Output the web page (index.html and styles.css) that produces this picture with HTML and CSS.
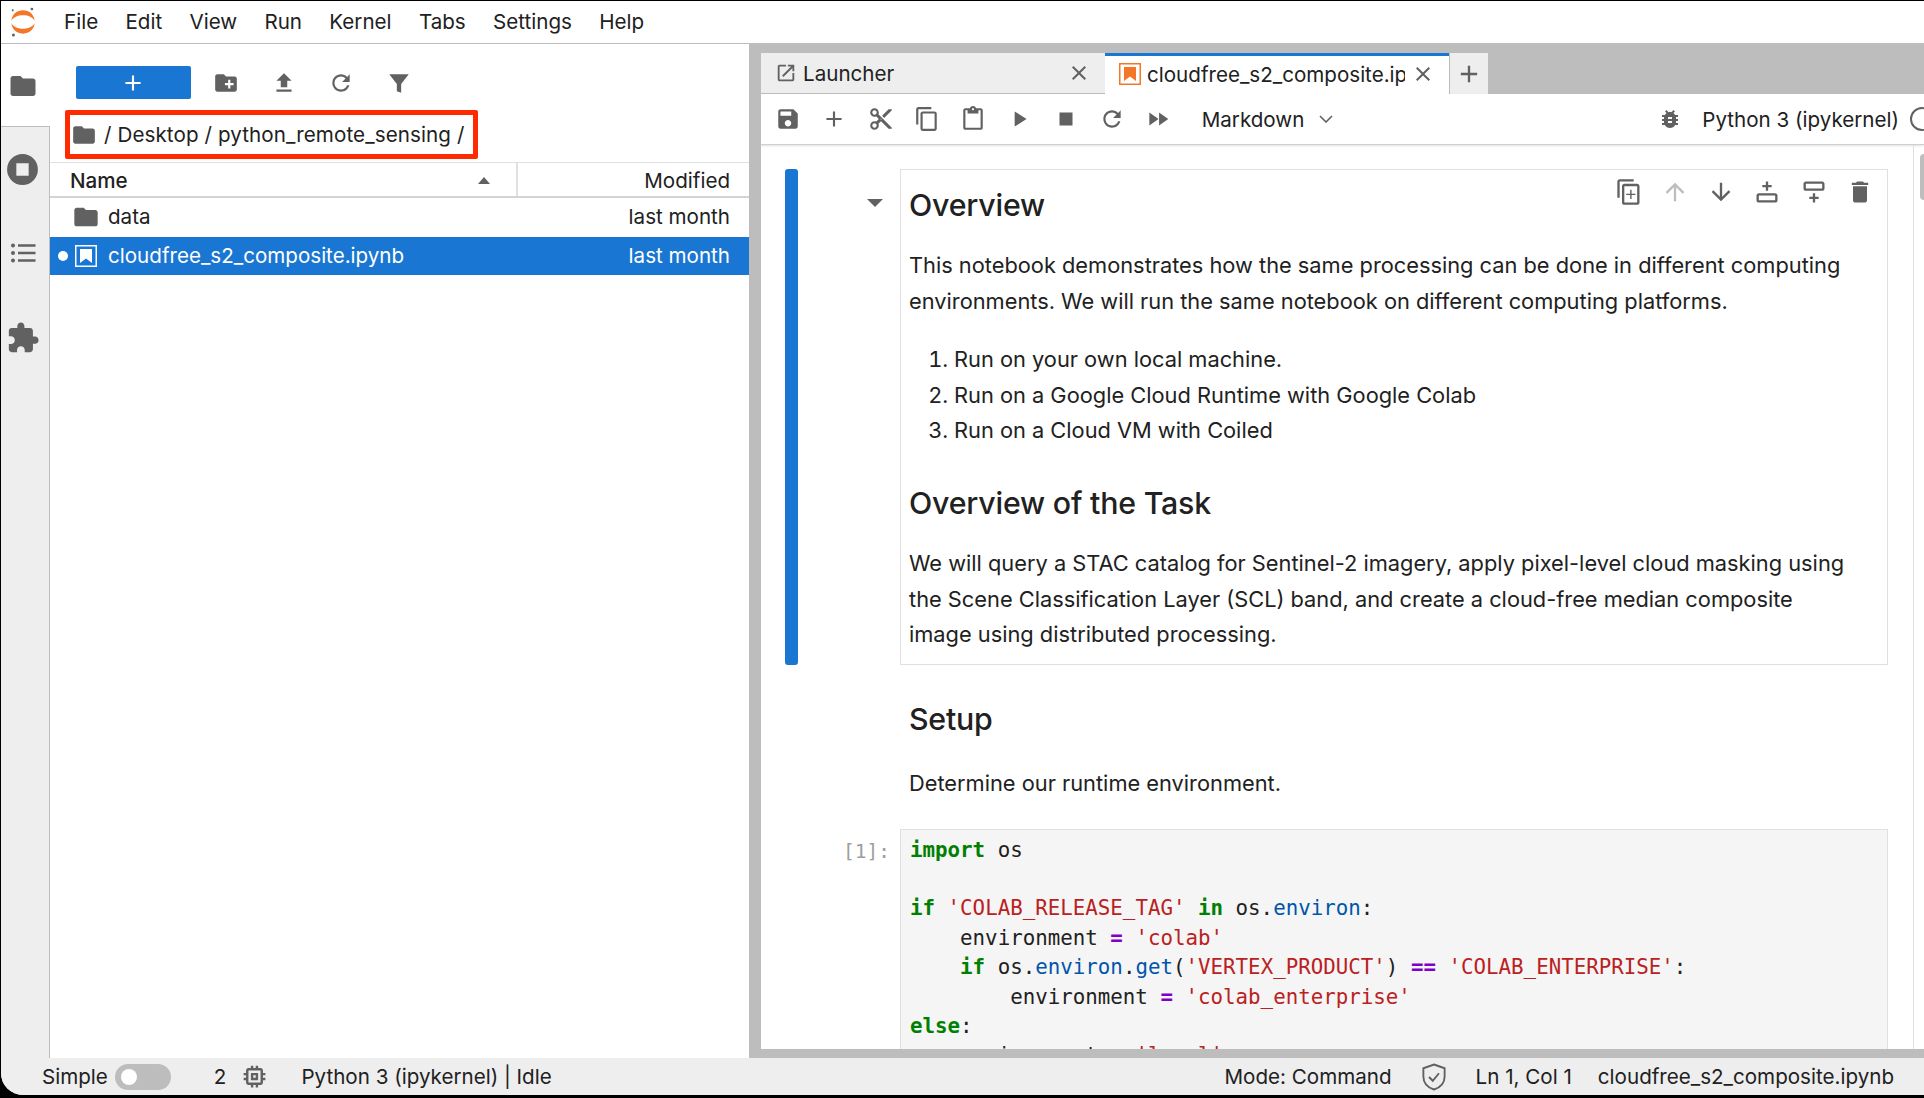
FILE: index.html
```html
<!DOCTYPE html>
<html lang="en">
  <head>
    <meta charset="UTF-8" />
    <title>JupyterLab</title>
    <link rel="stylesheet" href="styles.css">
  </head>
  <body>
    <!-- Icon sprite -->
    <svg class="sprite" xmlns="http://www.w3.org/2000/svg">
      <symbol id="i-folder" viewBox="0 0 24 24"><path d="M10 4H4c-1.1 0-1.99.9-1.99 2L2 18c0 1.1.9 2 2 2h16c1.1 0 2-.9 2-2V8c0-1.1-.9-2-2-2h-8l-2-2z"/></symbol>
      <symbol id="i-add" viewBox="0 0 24 24"><path d="M19 13h-6v6h-2v-6H5v-2h6V5h2v6h6v2z"/></symbol>
      <symbol id="i-newfolder" viewBox="0 0 24 24"><path d="M20 6h-8l-2-2H4c-1.11 0-1.99.89-1.99 2L2 18c0 1.11.89 2 2 2h16c1.11 0 2-.89 2-2V8c0-1.11-.89-2-2-2zm-1 8h-3v3h-2v-3h-3v-2h3V9h2v3h3v2z"/></symbol>
      <symbol id="i-upload" viewBox="0 0 24 24"><path d="M9 16h6v-6h4l-7-7-7 7h4zm-4 2h14v2H5z"/></symbol>
      <symbol id="i-refresh" viewBox="0 0 24 24"><path d="M17.65 6.35C16.2 4.9 14.21 4 12 4c-4.42 0-7.99 3.58-7.99 8s3.57 8 7.99 8c3.73 0 6.84-2.55 7.73-6h-2.08c-.82 2.33-3.04 4-5.65 4-3.31 0-6-2.69-6-6s2.69-6 6-6c1.66 0 3.14.69 4.22 1.78L13 11h7V4l-2.35 2.35z"/></symbol>
      <symbol id="i-filter" viewBox="0 0 24 24"><path d="M3 4h18l-7 9v8l-4-1.5V13z"/></symbol>
      <symbol id="i-save" viewBox="0 0 24 24"><path d="M17 3H5c-1.11 0-2 .9-2 2v14c0 1.1.89 2 2 2h14c1.1 0 2-.9 2-2V7l-4-4zm-5 16c-1.66 0-3-1.34-3-3s1.34-3 3-3 3 1.34 3 3-1.34 3-3 3zm3-10H5V5h10v4z"/></symbol>
      <symbol id="i-cut" viewBox="0 0 24 24"><path d="M9.64 7.64c.23-.5.36-1.05.36-1.64 0-2.21-1.79-4-4-4S2 3.79 2 6s1.79 4 4 4c.59 0 1.14-.13 1.64-.36L10 12l-2.36 2.36C7.14 14.13 6.59 14 6 14c-2.21 0-4 1.79-4 4s1.79 4 4 4 4-1.79 4-4c0-.59-.13-1.14-.36-1.64L12 14l7 7h3v-1L9.64 7.64zM6 8c-1.1 0-2-.89-2-2s.9-2 2-2 2 .89 2 2-.9 2-2 2zm0 12c-1.1 0-2-.89-2-2s.9-2 2-2 2 .89 2 2-.9 2-2 2zm6-7.5c-.28 0-.5-.22-.5-.5s.22-.5.5-.5.5.22.5.5-.22.5-.5.5zM19 3l-6 6 2 2 7-7V3z"/></symbol>
      <symbol id="i-copy" viewBox="0 0 24 24"><path d="M16 1H4c-1.1 0-2 .9-2 2v14h2V3h12V1zm3 4H8c-1.1 0-2 .9-2 2v14c0 1.1.9 2 2 2h11c1.1 0 2-.9 2-2V7c0-1.1-.9-2-2-2zm0 16H8V7h11v14z"/></symbol>
      <symbol id="i-paste" viewBox="0 0 24 24"><path d="M19 2h-4.18C14.4.84 13.3 0 12 0c-1.3 0-2.4.84-2.82 2H5c-1.1 0-2 .9-2 2v16c0 1.1.9 2 2 2h14c1.1 0 2-.9 2-2V4c0-1.1-.9-2-2-2zm-7 0c.55 0 1 .45 1 1s-.45 1-1 1-1-.45-1-1 .45-1 1-1zm7 18H5V4h2v3h10V4h2v16z"/></symbol>
      <symbol id="i-run" viewBox="0 0 24 24"><path d="M8 5v14l11-7z"/></symbol>
      <symbol id="i-stop" viewBox="0 0 24 24"><path d="M6 6h12v12H6z"/></symbol>
      <symbol id="i-ff" viewBox="0 0 24 24"><path d="M4 18l8.5-6L4 6v12zm9-12v12l8.5-6L13 6z"/></symbol>
      <symbol id="i-bug" viewBox="0 0 24 24"><path d="M20 8h-2.81c-.45-.78-1.07-1.45-1.82-1.96L17 4.41 15.59 3l-2.17 2.17C12.96 5.06 12.49 5 12 5c-.49 0-.96.06-1.41.17L8.41 3 7 4.41l1.62 1.63C7.88 6.55 7.26 7.22 6.81 8H4v2h2.09c-.05.33-.09.66-.09 1v1H4v2h2v1c0 .34.04.67.09 1H4v2h2.81c1.04 1.79 2.97 3 5.19 3s4.15-1.21 5.19-3H20v-2h-2.09c.05-.33.09-.66.09-1v-1h2v-2h-2v-1c0-.34-.04-.67-.09-1H20V8zm-6 8h-4v-2h4v2zm0-4h-4v-2h4v2z"/></symbol>
      <symbol id="i-up" viewBox="0 0 24 24"><path d="M4 12l1.41 1.41L11 7.83V20h2V7.83l5.58 5.59L20 12l-8-8-8 8z"/></symbol>
      <symbol id="i-down" viewBox="0 0 24 24"><path d="M20 12l-1.41-1.41L13 16.17V4h-2v12.17l-5.58-5.59L4 12l8 8 8-8z"/></symbol>
      <symbol id="i-trash" viewBox="0 0 24 24"><path d="M6 19c0 1.1.9 2 2 2h8c1.1 0 2-.9 2-2V7H6v12zM19 4h-3.5l-1-1h-5l-1 1H5v2h14V4z"/></symbol>
      <symbol id="i-close" viewBox="0 0 24 24"><path d="M19 6.41L17.59 5 12 10.59 6.41 5 5 6.41 10.59 12 5 17.59 6.41 19 12 13.41 17.59 19 19 17.59 13.41 12z"/></symbol>
      <symbol id="i-puzzle" viewBox="0 0 24 24"><path d="M20.5 11H19V7c0-1.1-.9-2-2-2h-4V3.5C13 2.12 11.88 1 10.5 1S8 2.12 8 3.5V5H4c-1.1 0-1.99.9-1.99 2v3.8H3.5c1.49 0 2.7 1.21 2.7 2.7s-1.21 2.7-2.7 2.7H2V20c0 1.1.9 2 2 2h3.8v-1.5c0-1.49 1.21-2.7 2.7-2.7 1.49 0 2.7 1.21 2.7 2.7V22H17c1.1 0 2-.9 2-2v-4h1.5c1.38 0 2.5-1.12 2.5-2.5S21.88 11 20.5 11z"/></symbol>
      <symbol id="i-list" viewBox="0 0 24 24"><path d="M8 5h14v2H8zM8 11h14v2H8zM8 17h14v2H8z"/><circle cx="4" cy="6" r="1.6"/><circle cx="4" cy="12" r="1.6"/><circle cx="4" cy="18" r="1.6"/></symbol>
      <symbol id="i-running" viewBox="0 0 24 24"><path fill-rule="evenodd" d="M12 2a10 10 0 1 0 0 20 10 10 0 0 0 0-20zM8 8h8v8H8z"/></symbol>
      <symbol id="i-chip" viewBox="0 0 24 24"><path d="M15 9H9v6h6V9zm-2 4h-2v-2h2v2zm8-2V9h-2V7c0-1.1-.9-2-2-2h-2V3h-2v2h-2V3H9v2H7c-1.1 0-2 .9-2 2v2H3v2h2v2H3v2h2v2c0 1.1.9 2 2 2h2v2h2v-2h2v2h2v-2h2c1.1 0 2-.9 2-2v-2h2v-2h-2v-2h2zm-4 6H7V7h10v10z"/></symbol>
      <symbol id="i-launch" viewBox="0 0 24 24"><path d="M19 19H5V5h7V3H5c-1.11 0-2 .9-2 2v14c0 1.1.89 2 2 2h14c1.1 0 2-.9 2-2v-7h-2v7zM14 3v2h3.59l-9.83 9.83 1.41 1.41L19 6.41V10h2V3h-7z"/></symbol>
      <symbol id="i-notebook" viewBox="0 0 22 22"><path fill-rule="evenodd" d="M0 0h22v22H0zM1.5 1.5v19h19v-19z"/><path d="M5 4h12v14l-6-4.5L5 18z"/></symbol>
      <symbol id="i-copybelow" viewBox="0 0 24 24"><path d="M16 1H4c-1.1 0-2 .9-2 2v14h2V3h12V1zm3 4H8c-1.1 0-2 .9-2 2v14c0 1.1.9 2 2 2h11c1.1 0 2-.9 2-2V7c0-1.1-.9-2-2-2zm0 16H8V7h11v14z"/><path d="M13 10h1.2v3.4h3.3v1.2h-3.3V18H13v-3.4H9.6v-1.2H13z"/></symbol>
      <symbol id="i-insertabove" viewBox="0 0 24 24"><path fill-rule="evenodd" d="M5 13h14c1.1 0 2 .9 2 2v4c0 1.1-.9 2-2 2H5c-1.1 0-2-.9-2-2v-4c0-1.1.9-2 2-2zm0 2v4h14v-4z"/><path d="M11 3h2v3h3v2h-3v3h-2V8H8V6h3z"/></symbol>
      <symbol id="i-insertbelow" viewBox="0 0 24 24"><path fill-rule="evenodd" d="M5 3h14c1.1 0 2 .9 2 2v4c0 1.1-.9 2-2 2H5c-1.1 0-2-.9-2-2V5c0-1.1.9-2 2-2zm0 2v4h14V5z"/><path d="M11 13h2v3h3v2h-3v3h-2v-3H8v-2h3z"/></symbol>
    </svg>

    <div class="app">
      <!-- Menu bar -->
      <header class="menubar">
        <svg class="logo" viewBox="0 0 38 46" xmlns="http://www.w3.org/2000/svg">
          <path fill="#f37726" d="M19 13C11 13 5 16 2 21 3 12 10 6 19 6s16 6 17 15c-3-5-9-8-17-8z"/>
          <path fill="#f37726" d="M19 33c8 0 14-3 17-8-1 9-8 15-17 15S3 34 2 25c3 5 9 8 17 8z"/>
          <circle cx="32" cy="4" r="2" fill="#616161"/>
          <circle cx="4" cy="6" r="1.5" fill="#616161"/>
          <circle cx="5" cy="42" r="2.2" fill="#616161"/>
        </svg>
        <nav class="menu">
          <span>File</span><span>Edit</span><span>View</span><span>Run</span>
          <span>Kernel</span><span>Tabs</span><span>Settings</span><span>Help</span>
        </nav>
      </header>

      <div class="workspace">
        <!-- Left icon rail -->
        <aside class="rail">
          <div class="rail-tab active"><svg class="ic ic-30"><use href="#i-folder"/></svg></div>
          <div class="rail-tab"><svg class="ic ic-37"><use href="#i-running"/></svg></div>
          <div class="rail-tab"><svg class="ic ic-30"><use href="#i-list"/></svg></div>
          <div class="rail-tab low"><svg class="ic ic-34"><use href="#i-puzzle"/></svg></div>
        </aside>

        <!-- File browser -->
        <section class="browser">
          <div class="browser-tools">
            <button class="new-btn"><svg class="ic ic-26"><use href="#i-add"/></svg></button>
            <svg class="ic ic-26"><use href="#i-newfolder"/></svg>
            <svg class="ic ic-26"><use href="#i-upload"/></svg>
            <svg class="ic ic-26"><use href="#i-refresh"/></svg>
            <svg class="ic ic-26"><use href="#i-filter"/></svg>
          </div>
          <div class="crumbs">
            <svg class="ic ic-26"><use href="#i-folder"/></svg>
            <span>/ Desktop / python_remote_sensing /</span>
          </div>
          <div class="file-head">
            <div class="col-name">
              <span>Name</span>
              <span class="sort-arrow"></span>
            </div>
            <div class="col-mod">Modified</div>
          </div>
          <div class="file-row">
            <svg class="ic ic-28"><use href="#i-folder"/></svg>
            <span class="file-name">data</span>
            <span class="file-date">last month</span>
          </div>
          <div class="file-row selected">
            <span class="dot"></span>
            <svg class="ic ic-22 white"><use href="#i-notebook"/></svg>
            <span class="file-name">cloudfree_s2_composite.ipynb</span>
            <span class="file-date">last month</span>
          </div>
        </section>

        <div class="splitter"></div>

        <!-- Notebook area -->
        <main class="main">
          <div class="tabbar">
            <div class="tab">
              <svg class="ic ic-22"><use href="#i-launch"/></svg>
              <span class="tab-label">Launcher</span>
              <svg class="ic ic-24 tab-close"><use href="#i-close"/></svg>
            </div>
            <div class="tab current">
              <svg class="ic ic-22 orange"><use href="#i-notebook"/></svg>
              <span class="tab-label">cloudfree_s2_composite.ipynb</span>
              <svg class="ic ic-24 tab-close"><use href="#i-close"/></svg>
            </div>
            <div class="tab-add"><svg class="ic ic-28"><use href="#i-add"/></svg></div>
          </div>

          <div class="nb-toolbar">
            <svg class="ic ic-26"><use href="#i-save"/></svg>
            <svg class="ic ic-26"><use href="#i-add"/></svg>
            <svg class="ic ic-26"><use href="#i-cut"/></svg>
            <svg class="ic ic-26"><use href="#i-copy"/></svg>
            <svg class="ic ic-26"><use href="#i-paste"/></svg>
            <svg class="ic ic-26"><use href="#i-run"/></svg>
            <svg class="ic ic-26"><use href="#i-stop"/></svg>
            <svg class="ic ic-26"><use href="#i-refresh"/></svg>
            <svg class="ic ic-26"><use href="#i-ff"/></svg>
            <div class="cell-type">
              <span>Markdown</span>
              <svg class="chevron" viewBox="0 0 14 8"><path d="M1 1l6 6 6-6" fill="none" stroke="#616161" stroke-width="1.6"/></svg>
            </div>
            <div class="kernel">
              <svg class="ic ic-24"><use href="#i-bug"/></svg>
              <span class="kernel-name">Python 3 (ipykernel)</span>
              <span class="kernel-status"></span>
            </div>
          </div>

          <div class="notebook">
            <div class="scroll-thumb"></div>

            <div class="cell">
              <div class="collapser"></div>
              <div class="prompt"><span class="caret"></span></div>
              <div class="md-box">
                <div class="cell-actions">
                  <svg class="ic ic-28"><use href="#i-copybelow"/></svg>
                  <svg class="ic ic-28 faded"><use href="#i-up"/></svg>
                  <svg class="ic ic-28"><use href="#i-down"/></svg>
                  <svg class="ic ic-28"><use href="#i-insertabove"/></svg>
                  <svg class="ic ic-28"><use href="#i-insertbelow"/></svg>
                  <svg class="ic ic-28"><use href="#i-trash"/></svg>
                </div>
                <h2>Overview</h2>
                <p>This notebook demonstrates how the same processing can be done in different computing environments. We will run the same notebook on different computing platforms.</p>
                <ol>
                  <li>Run on your own local machine.</li>
                  <li>Run on a Google Cloud Runtime with Google Colab</li>
                  <li>Run on a Cloud VM with Coiled</li>
                </ol>
                <h2 class="second">Overview of the Task</h2>
                <p>We will query a STAC catalog for Sentinel-2 imagery, apply pixel-level cloud masking using the Scene Classification Layer (SCL) band, and create a cloud-free median composite image using distributed processing.</p>
              </div>
            </div>

            <div class="cell">
              <div class="collapser blank"></div>
              <div class="prompt"></div>
              <div class="md-plain">
                <h2>Setup</h2>
                <p>Determine our runtime environment.</p>
              </div>
            </div>

            <div class="cell code-cell">
              <div class="collapser blank"></div>
              <div class="prompt code-prompt">[1]:</div>
<pre class="code"><b>import</b> os

<b>if</b> <i>'COLAB_RELEASE_TAG'</i> <b>in</b> os.<em>environ</em>:
    environment <u>=</u> <i>'colab'</i>
    <b>if</b> os.<em>environ</em>.<em>get</em>(<i>'VERTEX_PRODUCT'</i>) <u>==</u> <i>'COLAB_ENTERPRISE'</i>:
        environment <u>=</u> <i>'colab_enterprise'</i>
<b>else</b>:
    environment <u>=</u> <i>'local'</i></pre>
            </div>
          </div>
          <div class="hscroll"></div>
        </main>
      </div>

      <!-- Status bar -->
      <footer class="statusbar">
        <span class="st-simple">Simple</span>
        <span class="toggle"><span class="knob"></span></span>
        <span class="st-count">2</span>
        <svg class="ic ic-29"><use href="#i-chip"/></svg>
        <span class="st-kernel">Python 3 (ipykernel) | Idle</span>
        <span class="st-mode">Mode: Command</span>
        <svg class="shield" viewBox="0 0 24 24"><path d="M12 2l8.5 3v6.5c0 5-3.6 8.8-8.5 10.5-4.9-1.7-8.5-5.5-8.5-10.5V5z" fill="none" stroke="#616161" stroke-width="1.5"/><path d="M8 12l3 3 5-6" fill="none" stroke="#616161" stroke-width="1.5"/></svg>
        <span class="st-pos">Ln 1, Col 1</span>
        <span class="st-file">cloudfree_s2_composite.ipynb</span>
      </footer>
    </div>
  </body>
</html>
```

FILE: styles.css
```css
* {
  margin: 0;
  padding: 0;
  box-sizing: border-box;
}

html,
body {
  height: 100%;
  overflow: hidden;
}

body {
  background: #000;
  color: #212121;
  font-family: Inter, "Liberation Sans", sans-serif;
  font-size: 20.6px;
}

.sprite {
  display: none;
}

.app {
  margin: 1px 0 0 1px;
  height: 1094px;
  background: #fff;
  border-bottom-left-radius: 22px;
  display: flex;
  flex-direction: column;
  overflow: hidden;
}

.ic {
  fill: #616161;
  flex: none;
}
.ic-22 { width: 22px; height: 22px; }
.ic-24 { width: 24px; height: 24px; }
.ic-26 { width: 26px; height: 26px; }
.ic-28 { width: 28px; height: 28px; }
.ic-29 { width: 29px; height: 29px; }
.ic-30 { width: 30px; height: 30px; }
.ic-34 { width: 34px; height: 34px; }
.ic-37 { width: 37px; height: 37px; }
.white { fill: #fff; }
.orange { fill: #f37726; }
.faded { fill: #bdbdbd; }

/* Menu bar */
.menubar {
  height: 43px;
  flex: none;
  display: flex;
  align-items: center;
  border-bottom: 1px solid #bdbdbd;
}

.logo {
  width: 26px;
  height: 34px;
  margin-left: 9px;
}

.menu {
  display: flex;
  gap: 27.3px;
  margin-left: 28px;
  padding-bottom: 2px;
}

/* Main layout */
.workspace {
  flex: 1;
  min-height: 0;
  display: grid;
  grid-template-columns: 49px 699px 12px 1fr;
}

.rail {
  background: #eeeeee;
  border-right: 1px solid #bdbdbd;
}

.rail-tab {
  height: 84px;
  padding-right: 5px;
  display: flex;
  align-items: center;
  justify-content: center;
}

.rail-tab.low {
  padding-top: 2px;
}

.rail-tab.active {
  height: 83px;
  background: #fff;
  border-bottom: 1px solid #bdbdbd;
  margin-right: -1px;
  padding: 2px 6px 0 0;
}

/* File browser */
.browser {
  background: #fff;
  min-width: 0;
}

.browser-tools {
  height: 55px;
  padding: 22px 0 0 26px;
  display: flex;
  align-items: center;
}

.browser-tools > .ic-26 {
  margin-right: 31.6px;
}

.new-btn {
  width: 115px;
  height: 33px;
  border: none;
  border-radius: 2px;
  background: #1976d2;
  margin-right: 22px;
  padding-right: 2px;
  display: flex;
  align-items: center;
  justify-content: center;
}

.new-btn .ic {
  fill: #fff;
}

.crumbs {
  width: 413px;
  height: 49px;
  margin: 11px 0 0 15px;
  padding-left: 1px;
  border: 5px solid #ff2a00;
  border-radius: 2px;
  display: flex;
  align-items: center;
  gap: 7px;
  letter-spacing: 0.1px;
}

.file-head {
  height: 36px;
  margin-top: 3px;
  border-top: 1px solid #e0e0e0;
  border-bottom: 2px solid #d4d4d4;
  display: flex;
  align-items: center;
}

.col-name {
  width: 468px;
  height: 100%;
  padding: 2px 26px 0 20px;
  border-right: 2px solid #e0e0e0;
  display: flex;
  align-items: center;
  justify-content: space-between;
  font-weight: 500;
}

.sort-arrow {
  border: 6px solid transparent;
  border-top: none;
  border-bottom: 7px solid #616161;
}

.col-mod {
  flex: 1;
  text-align: right;
  padding: 2px 19px 0 0;
  font-weight: 400;
}

.file-row {
  height: 38.5px;
  display: flex;
  align-items: center;
  padding: 0 19px 1px 22px;
}

.file-row .file-name {
  margin-left: 8px;
}

.file-row .file-date {
  margin-left: auto;
}

.file-row.selected {
  background: #1976d2;
  color: #fff;
  padding: 0 19px 0 8px;
}

.dot {
  width: 10px;
  height: 10px;
  border-radius: 50%;
  background: #fff;
  margin-right: 7px;
}

.file-row.selected .file-name {
  margin-left: 11px;
}

.splitter {
  background: #bdbdbd;
}

/* Tabs */
.main {
  min-width: 0;
  display: flex;
  flex-direction: column;
  background: #fff;
  overflow: hidden;
}

.tabbar {
  height: 50px;
  flex: none;
  background: #bdbdbd;
  padding-top: 9px;
  display: flex;
}

.tab {
  width: 344px;
  background: #eeeeee;
  display: flex;
  align-items: center;
  padding: 0 14px;
  gap: 6px;
  border-bottom: 1px solid #bdbdbd;
}

.tab.current {
  background: #fff;
  border-top: 3px solid #1976d2;
  border-bottom: none;
  padding: 0 14px 2px;
  gap: 6px;
}

.tab-label {
  flex: 1;
  min-width: 0;
  overflow: hidden;
  white-space: nowrap;
}

.tab-close {
  margin-left: auto;
}

.tab-add {
  width: 39px;
  background: #eeeeee;
  border-left: 1px solid #bdbdbd;
  display: flex;
  align-items: center;
  justify-content: center;
}

/* Notebook toolbar */
.nb-toolbar {
  height: 51px;
  flex: none;
  display: flex;
  align-items: center;
  padding-left: 14px;
  gap: 20.3px;
  border-bottom: 1px solid #d0d0d0;
  box-shadow: 0 1px 2px rgba(0, 0, 0, 0.12);
  position: relative;
  white-space: nowrap;
}

.cell-type {
  display: flex;
  align-items: center;
  margin-left: 10px;
  gap: 15px;
}

.chevron {
  width: 14px;
  height: 8px;
}

.kernel {
  margin-left: auto;
  display: flex;
  align-items: center;
  margin-right: -10px;
}

.kernel-name {
  margin-left: 20px;
}

.kernel-status {
  width: 24px;
  height: 24px;
  margin-left: 11px;
  border: 2px solid #616161;
  border-radius: 50%;
}

/* Cells */
.notebook {
  flex: 1;
  min-height: 0;
  padding: 24px 36px 0 24px;
  font-size: 21.8px;
  line-height: 35.6px;
  overflow: hidden;
  position: relative;
}

.notebook::after {
  content: "";
  position: absolute;
  top: 0;
  bottom: 0;
  right: 10px;
  border-left: 1px solid #e0e0e0;
}

.scroll-thumb {
  position: absolute;
  top: 9px;
  right: 0;
  width: 4px;
  height: 46px;
  border-radius: 4px 0 0 4px;
  background: #bdbdbd;
}

.cell {
  display: grid;
  grid-template-columns: 13px 102px 1fr;
}

.collapser {
  background: #1976d2;
  border-radius: 3px;
}

.collapser.blank {
  background: none;
}

.prompt {
  position: relative;
}

.caret {
  position: absolute;
  top: 30px;
  right: 17px;
  border: 8px solid transparent;
  border-top: 8px solid #616161;
  border-bottom: none;
}

.md-box {
  position: relative;
  height: 496px;
  border: 1px solid #e0e0e0;
  padding: 0 37px 0 8px;
}

.cell-actions {
  position: absolute;
  top: 8px;
  right: 13px;
  display: flex;
  gap: 18.3px;
}

h2 {
  font-size: 30.3px;
  font-weight: 500;
  line-height: 40px;
  letter-spacing: -0.2px;
  color: #212121;
}

.md-box h2 {
  margin-top: 15px;
}

.md-box h2.second {
  margin-top: 34px;
}

.md-box p {
  margin-top: 21px;
}

.md-box h2 + p {
  margin-top: 23px;
}

ol {
  margin-top: 23px;
  padding-left: 45px;
}

.md-plain {
  padding: 34px 9px 0;
}

.md-plain p {
  margin-top: 27px;
}

.code-cell {
  margin-top: 27px;
}

.code-prompt {
  font-family: "DejaVu Sans Mono", monospace;
  font-size: 19.5px;
  line-height: 29.4px;
  color: #9e9e9e;
  text-align: right;
  padding: 8px 10px 0 0;
}

.code {
  background: #f5f5f5;
  border: 1px solid #e0e0e0;
  padding: 6px 9px 8px;
  font-family: "DejaVu Sans Mono", monospace;
  font-size: 20.8px;
  line-height: 29.4px;
  color: #212121;
}

.code b {
  color: #008000;
  font-weight: 700;
}

.code i {
  color: #ba2121;
  font-style: normal;
}

.code em {
  color: #0055aa;
  font-style: normal;
}

.code u {
  color: #7f00c8;
  font-weight: 700;
  text-decoration: none;
}

.hscroll {
  height: 9px;
  flex: none;
  background: #bdbdbd;
}

/* Status bar */
.statusbar {
  height: 37px;
  flex: none;
  background: #eeeeee;
  display: flex;
  align-items: center;
  padding-left: 41px;
  white-space: nowrap;
}

.toggle {
  width: 56px;
  height: 26px;
  margin-left: 7px;
  border-radius: 13px;
  background: #bdbdbd;
  display: flex;
  align-items: center;
  padding-left: 6px;
}

.knob {
  width: 16px;
  height: 16px;
  border-radius: 50%;
  background: #fff;
}

.st-count {
  margin-left: 43px;
}

.statusbar .ic-29 {
  margin-left: 14px;
}

.st-kernel {
  margin-left: 32px;
}

.st-mode {
  margin-left: auto;
}

.shield {
  width: 30px;
  height: 30px;
  margin-left: 27px;
}

.st-pos {
  margin-left: 27px;
}

.st-file {
  margin-left: 26px;
  margin-right: 30px;
}
```
